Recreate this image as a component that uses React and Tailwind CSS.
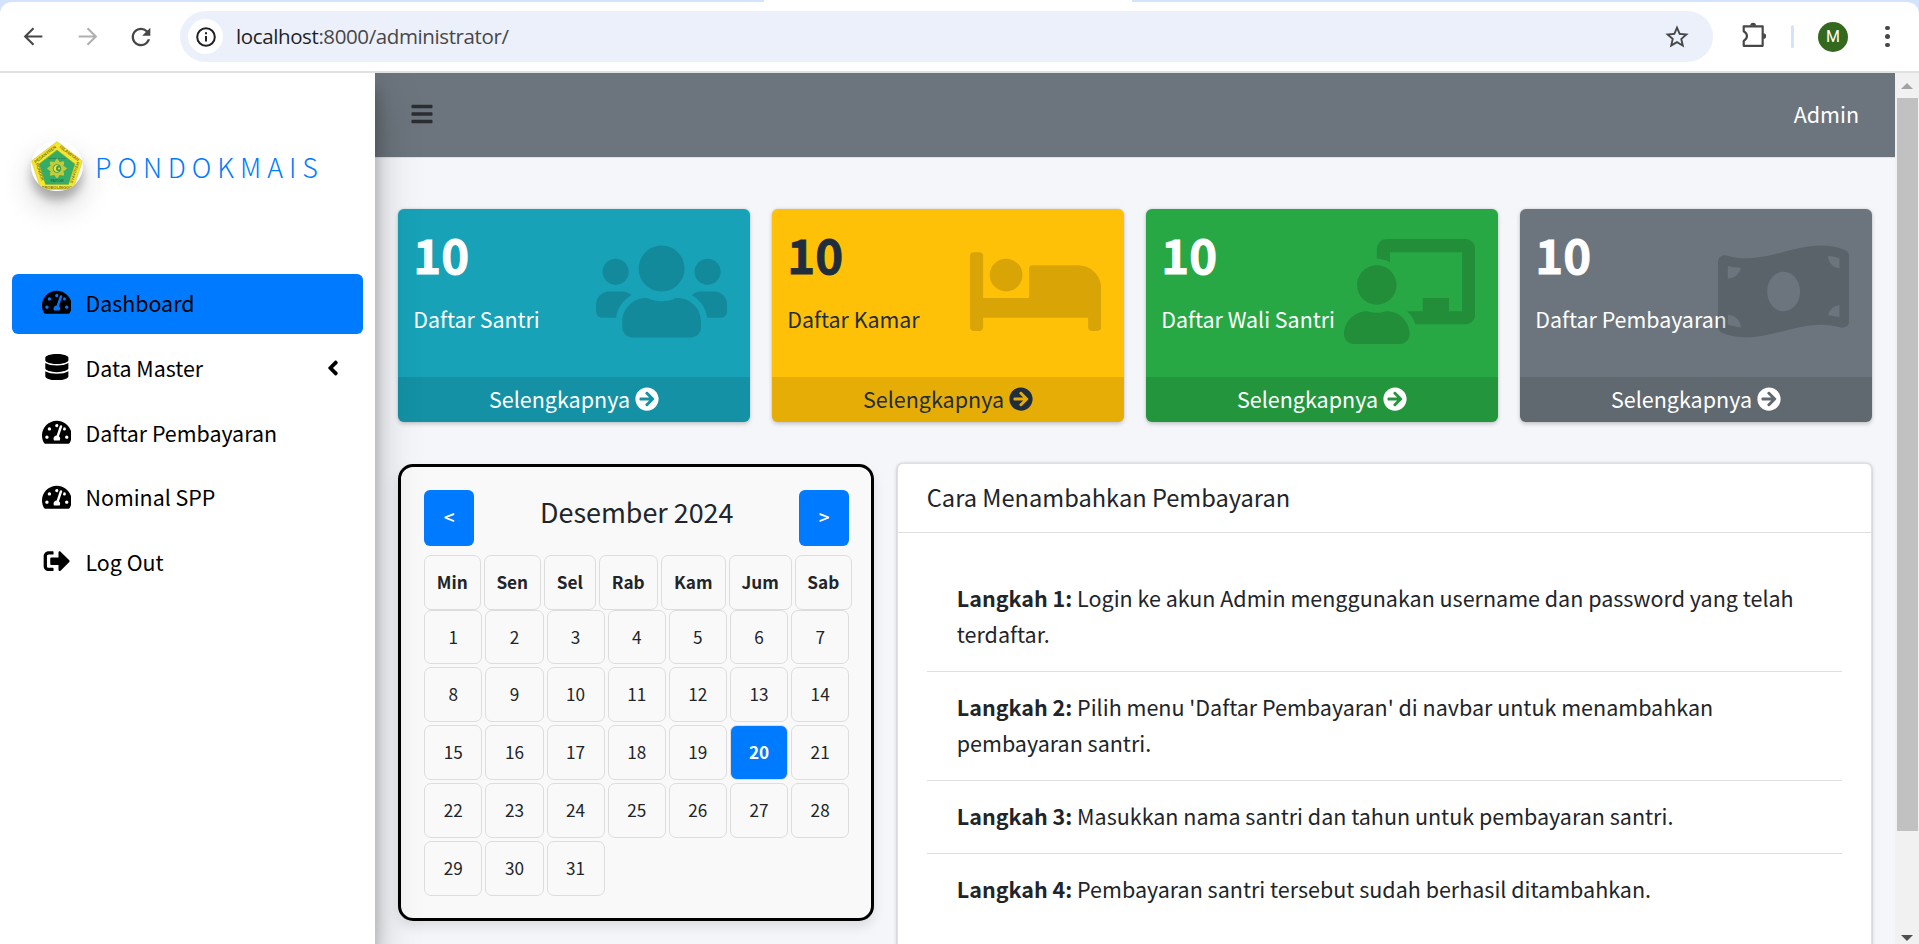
import React from "react";
import {
  FaTachometerAlt, FaDatabase, FaSignOutAlt, FaAngleLeft, FaBars, FaUsers, FaBed,
  FaChalkboardTeacher, FaMoneyBillWave, FaArrowCircleRight,
} from "react-icons/fa";
import { MdRefresh, MdStarBorder } from "react-icons/md";

function BrowserBar() {
  return (
    <header className="flex h-[73px] shrink-0 flex-col bg-[#d3e3fd]">
      <div className="flex h-[2px] shrink-0">
        <div className="ml-[764px] w-[368px] bg-white" />
      </div>
      <div className="flex h-[71px] items-start rounded-t-xl border-b-2 border-[#e0e2e0] bg-white pt-[9px] font-['Open_Sans',sans-serif]">
        <div className="flex h-[51px] w-[180px] shrink-0 items-center">
          <svg viewBox="0 0 24 24" className="ml-[21px] size-[25px]" fill="none" stroke="#474747" strokeWidth="2">
            <path d="M20.500 12H4.500M12 4l-8 8 8 8" />
          </svg>
          <svg viewBox="0 0 24 24" className="ml-[29px] size-[25px]" fill="none" stroke="#b0b0b0" strokeWidth="2">
            <path d="M3.500 12h16M12 4l8 8-8 8" />
          </svg>
          <MdRefresh className="ml-[27px] size-[28px] text-[#474747]" />
        </div>
        <div className="flex h-[51px] w-[1533px] shrink-0 items-center rounded-full bg-[#ecf0fa]">
          <div className="ml-[8px] flex size-[35px] items-center justify-center rounded-full bg-white">
            <svg viewBox="0 0 20 20" className="size-[20px]" fill="none" stroke="#202124" strokeWidth="2">
              <circle cx="10" cy="10" r="8.800" />
              <path d="M10 9v5.500M10 5.300v2" />
            </svg>
          </div>
          <div className="mb-[2px] ml-[13px] flex-1 whitespace-nowrap text-[20.5px] leading-[30px] tracking-[-0.39px] text-[#474747]">
            <span className="text-[#1f1f1f]">localhost</span>:8000/administrator/
          </div>
          <MdStarBorder className="mr-[22px] size-[28px] text-[#474747]" />
        </div>
        <div className="flex h-[51px] flex-1 items-center">
          <svg viewBox="0 0 24 24" className="mb-[3px] ml-[28px] size-[26px]" fill="none" stroke="#474747" strokeWidth="2" strokeLinejoin="round">
            <path d="M2.500 4H20v18H2.500v-4.500c4-2.500 4-6.500 0-9z" />
            <path d="M8.500 3.500a2.700 2.700 0 0 1 5.400 0zM20.500 10.300a2.700 2.700 0 0 1 0 5.400z" fill="#474747" stroke="none" />
          </svg>
          <div className="ml-[24px] h-[23px] w-[3px] rounded-full bg-[#d3e3fd]" />
          <div className="ml-[24px] flex size-[30px] items-center justify-center rounded-full bg-[#33691e] font-['Roboto',sans-serif] text-[16px] text-white">M</div>
          <div className="ml-[37px] flex flex-col gap-[4px]">
            <i className="size-[4.5px] rounded-full bg-[#474747]" />
            <i className="size-[4.5px] rounded-full bg-[#474747]" />
            <i className="size-[4.5px] rounded-full bg-[#474747]" />
          </div>
        </div>
      </div>
    </header>
  );
}

function Logo() {
  return (
    <div className="h-[49.5px] w-[52px] rounded-full bg-white shadow-[0_15px_30px_rgba(0,0,0,.19),0_9px_9px_rgba(0,0,0,.23)]">
      <svg viewBox="0 0 104 99" className="h-full w-full overflow-hidden rounded-full">
        <path d="M52 1 103 40 84 97H20L1 40Z" fill="#f5e72c" stroke="#c9bc3a" strokeWidth="1" />
        <path d="M52 18 88 46 75 87H29L16 46Z" fill="#35ad67" stroke="#8fb03a" strokeWidth="1" />
        <g fontFamily="Liberation Sans" fontWeight="700" fontSize="8.500" fill="#7d7524" textAnchor="middle">
          <text transform="translate(30 29) rotate(-37)">PESANTREN</text>
          <text transform="translate(75 27) rotate(37)">ISLAMIYAH</text>
          <text transform="translate(15 63) rotate(72)">PONDOK</text>
          <text transform="translate(90 64) rotate(-72)">SYAFIIYAH</text>
          <text x="52" y="95" fontSize="8">PROBOLINGGO</text>
          <text x="52" y="82" fontSize="7" fill="#256b43">PAITON</text>
          <text x="52" y="36" fontSize="5" fill="#256b43">NURUL JADID</text>
        </g>
        <g fill="#c3cb3a">
          {[0, 45, 90, 135, 180, 225, 270, 315].map((a) => (
            <path key={a} transform={`rotate(${a} 52 55)`} d="M52 35c3 3 6 6 6 12h-12c0-6 3-9 6-12z" />
          ))}
          <circle cx="52" cy="55" r="13" />
        </g>
        <circle cx="52" cy="55" r="8.500" fill="#3c9f55" />
        <path d="M56 49a7 7 0 1 0 0 12 6 6 0 1 1 0-12z" fill="#f0e53a" />
        <circle cx="56" cy="55" r="2" fill="#f0e53a" />
      </svg>
    </div>
  );
}

const menu = [
  { label: "Dashboard", Icon: FaTachometerAlt, active: true },
  { label: "Data Master", Icon: FaDatabase, arrow: true },
  { label: "Daftar Pembayaran", Icon: FaTachometerAlt },
  { label: "Nominal SPP", Icon: FaTachometerAlt },
  { label: "Log Out", Icon: FaSignOutAlt },
];

function Sidebar() {
  return (
    <aside className="z-10 flex w-[375px] shrink-0 flex-col bg-white px-3 shadow-[0_21px_42px_rgba(0,0,0,.25),0_15px_15px_rgba(0,0,0,.22)]">
      <div className="flex h-[201px] items-start pt-[68px] pl-[19px]">
        <Logo />
        <span className="mt-px ml-[12px] text-[26.9px] leading-[50px] font-light tracking-[5.95px] text-[#007bff]">PONDOKMAIS</span>
      </div>
      <nav className="flex flex-col gap-[4.8px]">
        {menu.map(({ label, Icon, active, arrow }) => (
          <a key={label} className={`flex h-[60px] items-center rounded-md pr-[18px] pl-[25.5px] text-black ${active ? "bg-[#007bff]" : ""}`}>
            <span className="mb-[3px] flex w-[38px] justify-center">
              <Icon className="h-[26.4px] w-[29.7px]" />
            </span>
            <span className="mb-[2px] ml-[10px] flex-1 text-[21.4px] leading-[36px]">{label}</span>
            {arrow && <FaAngleLeft className="mb-[2px] size-[24px]" />}
          </a>
        ))}
      </nav>
    </aside>
  );
}

const stats = [
  { label: "Daftar Santri", Icon: FaUsers, cls: "bg-[#17a2b8] text-white" },
  { label: "Daftar Kamar", Icon: FaBed, cls: "bg-[#ffc107] text-[#1f2d3d]" },
  { label: "Daftar Wali Santri", Icon: FaChalkboardTeacher, cls: "bg-[#28a745] text-white" },
  { label: "Daftar Pembayaran", Icon: FaMoneyBillWave, cls: "bg-[#6c757d] text-white" },
];

function StatCard({ label, Icon, cls }) {
  return (
    <div className={`relative flex h-[213px] flex-col overflow-hidden rounded-md shadow-[0_0_1.5px_rgba(0,0,0,.125),0_1.5px_4.5px_rgba(0,0,0,.2)] ${cls}`}>
      <div className="flex h-[168px] flex-col px-[15px] pt-[13px]">
        <h3 className="text-[47.3px] leading-[63px] font-bold [-webkit-text-stroke:0.9px_currentColor]">10</h3>
        <p className="mt-[16px] text-[21.4px] leading-[36px]">{label}</p>
      </div>
      <Icon className="absolute top-[30px] right-[23px] h-[105px] w-[131.25px] text-black/15" />
      <div className="flex h-[45px] items-center justify-center gap-[5px] bg-black/10">
        <span className="mb-[2px] text-[21.5px] leading-[36px]">Selengkapnya</span>
        <FaArrowCircleRight className="mb-[2px] size-[24px]" />
      </div>
    </div>
  );
}

const weekdays = [
  ["Min", "w-[57px]"], ["Sen", "w-[57px]"], ["Sel", "w-[52px]"], ["Rab", "w-[59px]"],
  ["Kam", "w-[65px]"], ["Jum", "w-[63px]"], ["Sab", "w-[57px]"],
];
const days = Array.from({ length: 31 }, (_, i) => i + 1);

function Calendar() {
  return (
    <section className="h-[457px] w-[476px] shrink-0 rounded-[15px] border-3 border-black bg-[#f9f9f9] px-[23px] pt-[23px] shadow-[0_6px_12px_rgba(0,0,0,.1)]">
      <div className="flex h-[65px] w-[425px] items-start justify-between">
        <button className="h-[56px] w-[50px] rounded-md bg-[#007bff] pb-px text-[19px] font-medium text-white">&lt;</button>
        <h2 className="text-[26.9px] leading-[43px] text-[#212529]">Desember 2024</h2>
        <button className="h-[56px] w-[50px] rounded-md bg-[#007bff] pb-px text-[19px] font-medium text-white">&gt;</button>
      </div>
      <div className="flex w-[430px] gap-[3px]">
        {weekdays.map(([d, w]) => (
          <div key={d} className={`flex h-[55px] shrink-0 items-center justify-center rounded-[7px] border border-[#ddd] pr-px pb-[2px] text-[17.2px] font-bold text-[#212529] ${w}`}>{d}</div>
        ))}
      </div>
      <div className="grid w-[425px] grid-cols-7 grid-rows-[54px_55px_55px_55px_55px] gap-[3px]">
        {days.map((d) => (
          <div key={d} className={`flex items-center justify-center rounded-[7px] border border-[#ddd] pb-px text-[17.2px] ${d === 20 ? "bg-[#007bff] font-bold text-white" : "text-[#212529]"}`}>{d}</div>
        ))}
      </div>
    </section>
  );
}

const steps = [
  "Login ke akun Admin menggunakan username dan password yang telah terdaftar.",
  "Pilih menu 'Daftar Pembayaran' di navbar untuk menambahkan pembayaran santri.",
  "Masukkan nama santri dan tahun untuk pembayaran santri.",
  "Pembayaran santri tersebut sudah berhasil ditambahkan.",
];

function Guide() {
  return (
    <section className="-mt-px h-[560px] flex-1 rounded-md border border-black/12 bg-white text-[#212529] shadow-[0_0_1.5px_rgba(0,0,0,.125),0_1.5px_4.5px_rgba(0,0,0,.2)]">
      <div className="h-[69px] border-b border-[#dfdfdf] px-[29px] pt-[15px] text-[23.65px] leading-[36px]">Cara Menambahkan Pembayaran</div>
      <ol className="px-[29px] pt-[30px]">
        {steps.map((s, i) => (
          <li key={s} className="border-b border-[#dfdfdf] px-[30px] pt-[17px] pb-[19px] text-[21.5px] leading-[36px] last:border-0">
            <strong className="font-bold">Langkah {i + 1}:</strong> {s}
          </li>
        ))}
      </ol>
    </section>
  );
}

function Scrollbar() {
  return (
    <div className="flex w-[24px] shrink-0 flex-col items-center justify-between bg-[#f1f1f1]">
      <div className="flex flex-col items-center">
        <svg viewBox="0 0 12 6" className="mt-[10px] h-[6px] w-[12px]"><path d="M0 6 6 0l6 6z" fill="#a3a3a3" /></svg>
        <div className="mt-[9px] ml-px h-[733px] w-[21px] bg-[#c1c1c1]" />
      </div>
      <svg viewBox="0 0 12 6" className="mb-[3px] h-[6px] w-[12px]"><path d="M0 0h12L6 6z" fill="#505050" /></svg>
    </div>
  );
}

export default function App() {
  return (
    <div className="flex h-[944px] w-[1919px] flex-col overflow-hidden bg-[#f4f6f9] font-['Noto_Sans_CJK_SC',sans-serif]">
      <BrowserBar />
      <div className="flex min-h-0 flex-1 overflow-hidden">
        <Sidebar />
        <main className="flex w-[1520px] shrink-0 flex-col">
          <div className="flex h-[85px] shrink-0 items-center justify-between border-b border-[#dee2e6] bg-[#6c757d] pr-[36px] pl-[34.5px]">
            <FaBars className="mb-[2px] size-[24px] text-[#2b2e31]" />
            <span className="mb-[2px] text-[21.5px] leading-[36px] text-white">Admin</span>
          </div>
          <div className="grid grid-cols-4 gap-[22.5px] px-[23.25px] pt-[51px]">
            {stats.map((s) => <StatCard key={s.label} {...s} />)}
          </div>
          <div className="flex items-start gap-[22.5px] px-[23.25px] pt-[42px]">
            <Calendar />
            <Guide />
          </div>
        </main>
        <Scrollbar />
      </div>
    </div>
  );
}
